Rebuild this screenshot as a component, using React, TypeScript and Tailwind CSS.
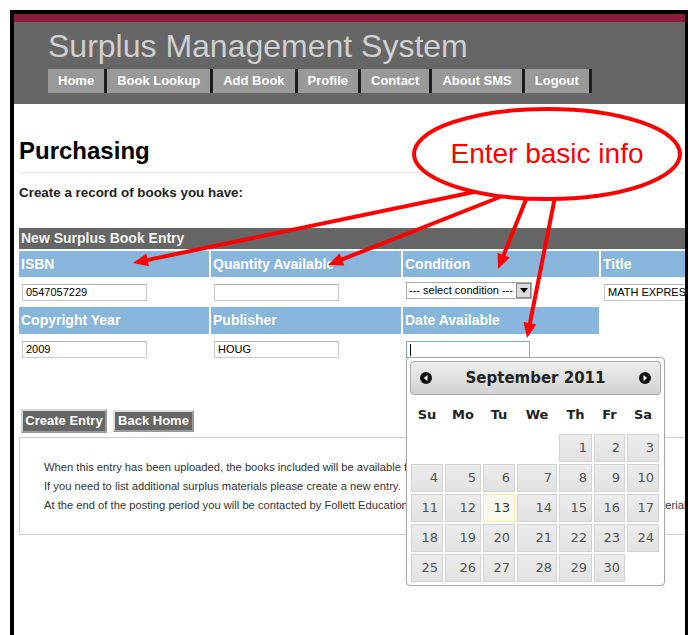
import React from "react";

const navItems = ["Home", "Book Lookup", "Add Book", "Profile", "Contact", "About SMS", "Logout"];

const cols = "grid grid-cols-[190px_190px_196px_190px] gap-x-[2px]";
const calCols = "grid grid-cols-[32px_36px_32px_40px_33px_31px_32px] gap-x-[2px]";

const weeks: (number | null)[][] = [
  [null, null, null, null, 1, 2, 3],
  [4, 5, 6, 7, 8, 9, 10],
  [11, 12, 13, 14, 15, 16, 17],
  [18, 19, 20, 21, 22, 23, 24],
  [25, 26, 27, 28, 29, 30, null],
];

function NavCircle({ dir }: { dir: "left" | "right" }) {
  return (
    <svg width="12" height="12" viewBox="0 0 12 12">
      <circle cx="6" cy="6" r="6" fill="#111" />
      {dir === "left" ? (
        <polygon points="7.5,3 3.8,6 7.5,9" fill="#fff" />
      ) : (
        <polygon points="4.5,3 8.2,6 4.5,9" fill="#fff" />
      )}
    </svg>
  );
}

function Calendar() {
  return (
    <div className="absolute left-[406px] top-[357px] h-[229px] w-[259px] rounded-[4px] border border-[#aaaaaa] bg-white p-[3px] font-['DejaVu_Sans',sans-serif] shadow-[0_0_2px_rgba(0,0,0,0.15)]">
      <div className="flex h-[34px] items-center justify-between rounded-[4px] border border-[#aaaaaa] bg-linear-to-b from-[#eeeeee] to-[#d2d2d2] px-[9px]">
        <NavCircle dir="left" />
        <span className="text-[15px] font-bold text-[#222222]">September 2011</span>
        <NavCircle dir="right" />
      </div>
      <div className="px-[1px]">
        <div className={`${calCols} h-[39px] items-center text-center text-[13px] font-bold text-[#222222]`}>
          {["Su", "Mo", "Tu", "We", "Th", "Fr", "Sa"].map((d) => (
            <span key={d}>{d}</span>
          ))}
        </div>
        <div className={`${calCols} gap-y-[2px]`}>
          {weeks.flat().map((n, i) =>
            n === null ? (
              <div key={i} className="h-[28px]" />
            ) : n === 13 ? (
              <div
                key={i}
                className="flex h-[28px] items-center justify-end border border-[#fcefa1] bg-[#fbf9ee] pr-[4px] text-[13px] text-[#363636]"
              >
                {n}
              </div>
            ) : (
              <div
                key={i}
                className="flex h-[28px] items-center justify-end border border-[#d3d3d3] bg-linear-to-b from-[#ececec] to-[#e2e2e2] pr-[4px] text-[13px] text-[#555555]"
              >
                {n}
              </div>
            )
          )}
        </div>
      </div>
    </div>
  );
}

type Pt = [number, number];

function Arrow({ from, to }: { from: Pt; to: Pt }) {
  const dx = to[0] - from[0];
  const dy = to[1] - from[1];
  const len = Math.hypot(dx, dy);
  const ux = dx / len;
  const uy = dy / len;
  const head = 15;
  const half = 6.5;
  const bx = to[0] - ux * head;
  const by = to[1] - uy * head;
  const p1 = `${bx - uy * half},${by + ux * half}`;
  const p2 = `${bx + uy * half},${by - ux * half}`;
  return (
    <g>
      <line x1={from[0]} y1={from[1]} x2={bx + ux * 2} y2={by + uy * 2} stroke="#ff0000" strokeWidth="4" />
      <polygon points={`${to[0]},${to[1]} ${p1} ${p2}`} fill="#ff0000" />
    </g>
  );
}

function Callout() {
  return (
    <svg className="pointer-events-none absolute left-0 top-0" width="688" height="635" viewBox="0 0 688 635">
      <Arrow from={[474, 192]} to={[133, 263]} />
      <Arrow from={[500, 197]} to={[328, 265]} />
      <Arrow from={[527, 197]} to={[498, 269]} />
      <Arrow from={[555, 197]} to={[527, 338]} />
      <ellipse cx="547" cy="154" rx="133" ry="45" fill="#ffffff" stroke="#ff0000" strokeWidth="4" />
      <text
        x="547"
        y="163"
        textAnchor="middle"
        fill="#ff0000"
        fontSize="28"
        fontFamily="'Liberation Sans', Arial, sans-serif"
      >
        Enter basic info
      </text>
    </svg>
  );
}

function TextInput({ value, width, focused }: { value?: string; width: string; focused?: boolean }) {
  return (
    <div
      className={`flex h-[17px] items-center overflow-hidden border bg-white pl-[3px] text-[11px] text-black ${width} ${
        focused ? "border-[#7fa7d2]" : "border-[#c9c9c9] border-t-[#b5b5b5]"
      }`}
    >
      {focused ? <span className="h-[12px] w-[1px] bg-black" /> : <span className="whitespace-nowrap">{value}</span>}
    </div>
  );
}

export default function App() {
  return (
    <div className="relative h-[635px] w-[688px] overflow-hidden bg-white font-['Liberation_Sans',Arial,sans-serif]">
      <div className="ml-[10px] mt-[10px] h-[640px] w-[679px] overflow-hidden border-4 border-b-0 border-black bg-white">
        {/* top banner */}
        <div className="h-[8px] bg-[#8a1c3c]" />
        <div className="h-[82px] bg-[#666666] pl-[34px] pt-[7px]">
          <div className="text-[32px] leading-[35px] text-[#cfcfcf]">Surplus Management System</div>
          <nav className="mt-[5px] flex h-[24px]">
            {navItems.map((n) => (
              <div
                key={n}
                className="flex h-[24px] items-center border-r-[3px] border-[#1c1c1c] bg-[#999999] px-[10px] text-[13px] font-bold text-white"
              >
                {n}
              </div>
            ))}
          </nav>
        </div>

        {/* page body */}
        <div className="pl-[5px]">
          <h1 className="mt-[33px] text-[24px] font-bold leading-[28px] text-black">Purchasing</h1>
          <div className="mt-[7px] h-[1px] bg-[#e6e6e6]" />
          <p className="mt-[12px] text-[13.4px] font-bold leading-[16px] text-[#222222]">
            Create a record of books you have:
          </p>

          <div className="mt-[27px] w-[800px]">
            <div className="flex h-[21px] items-center bg-[#666666] pl-[2px] text-[14px] font-bold text-[#f2f2f2]">
              New Surplus Book Entry
            </div>
            <div className={`${cols} mt-[2px] h-[26px] bg-white`}>
              {["ISBN", "Quantity Available", "Condition", "Title"].map((h) => (
                <div key={h} className="flex items-center bg-[#88b5dc] pl-[2px] text-[14px] font-bold text-white">
                  {h}
                </div>
              ))}
            </div>
            <div className={`${cols} h-[30px] pt-[7px]`}>
              <div className="pl-[3px]">
                <TextInput value="0547057229" width="w-[125px]" />
              </div>
              <div className="pl-[3px]">
                <TextInput width="w-[125px]" />
              </div>
              <div className="pl-[3px]">
                <div className="-mt-[2px] flex h-[17px] w-[126px] items-center justify-between border border-[#a9a9a9] bg-white pl-[2px] text-[11px] text-black">
                  <span className="whitespace-nowrap">--- select condition ---</span>
                  <span className="flex h-[15px] w-[15px] items-center justify-center border border-[#8a8a8a] bg-[#dcdcdc]">
                    <svg width="8" height="5" viewBox="0 0 8 5">
                      <polygon points="0,0 8,0 4,5" fill="#000" />
                    </svg>
                  </span>
                </div>
              </div>
              <div className="pl-[3px]">
                <TextInput value="MATH EXPRESSIONS" width="w-[125px]" />
              </div>
            </div>
            <div className={`${cols} h-[27px]`}>
              {["Copyright Year", "Publisher", "Date Available"].map((h) => (
                <div key={h} className="flex items-center bg-[#88b5dc] pl-[2px] text-[14px] font-bold text-white">
                  {h}
                </div>
              ))}
              <div />
            </div>
            <div className={`${cols} h-[30px] pt-[7px]`}>
              <div className="pl-[3px]">
                <TextInput value="2009" width="w-[125px]" />
              </div>
              <div className="pl-[3px]">
                <TextInput value="HOUG" width="w-[125px]" />
              </div>
              <div className="pl-[3px]">
                <TextInput width="w-[124px]" focused />
              </div>
              <div />
            </div>
          </div>

          <div className="mt-[45px] flex gap-[6px] pl-[2px]">
            <button className="flex h-[24px] w-[86px] items-center justify-center border-2 border-[#d4d4d4] border-b-[#9a9a9a] border-r-[#9a9a9a] bg-[#666666] text-[13px] font-bold text-white">
              Create Entry
            </button>
            <button className="mt-[1px] flex h-[22px] w-[81px] items-center justify-center border-2 border-[#e0e0e0] border-b-[#9a9a9a] border-r-[#9a9a9a] bg-[#666666] text-[13px] font-bold text-white">
              Back Home
            </button>
          </div>

          <div className="mt-[4px] h-[98px] w-[700px] border border-[#cccccc] pl-[24px] pt-[20px] text-[11.2px] leading-[19px] text-[#333333]">
            <p className="whitespace-nowrap">
              When this entry has been uploaded, the books included will be available for viewing by schools.
            </p>
            <p className="whitespace-nowrap">If you need to list additional surplus materials please create a new entry.</p>
            <p className="whitespace-nowrap">
              At the end of the posting period you will be contacted by Follett Educational Services regarding the pickup of
              your surplus materials.
            </p>
          </div>
        </div>
      </div>

      <Calendar />
      <Callout />
    </div>
  );
}
